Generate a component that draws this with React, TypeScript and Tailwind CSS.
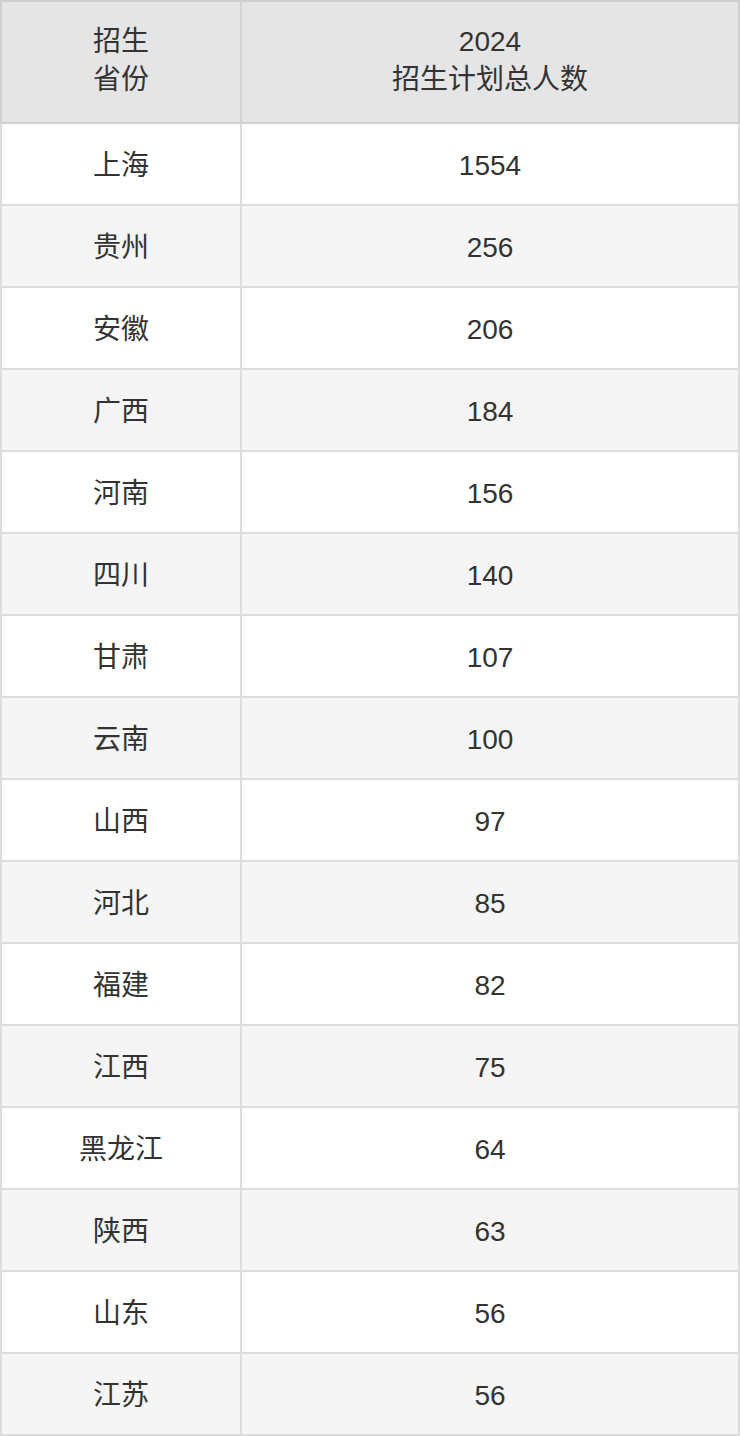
import React from 'react';

const rows: [string, string][] = [
  ['上海', '1554'],
  ['贵州', '256'],
  ['安徽', '206'],
  ['广西', '184'],
  ['河南', '156'],
  ['四川', '140'],
  ['甘肃', '107'],
  ['云南', '100'],
  ['山西', '97'],
  ['河北', '85'],
  ['福建', '82'],
  ['江西', '75'],
  ['黑龙江', '64'],
  ['陕西', '63'],
  ['山东', '56'],
  ['江苏', '56'],
];

const App: React.FC = () => {
  return (
    <div
      className="w-[740px] bg-white text-[#333333] text-[28px]"
      style={{ fontFamily: '"Liberation Sans", "Noto Sans CJK SC", sans-serif' }}
    >
      <div className="flex border-2 border-[#cfcfcf] bg-[#e5e5e5]">
        <div className="w-[240px] h-[120px] flex flex-col items-center justify-center pb-[3px] leading-[38px] border-r-2 border-[#d3d3d3]">
          <div>招生</div>
          <div>省份</div>
        </div>
        <div className="flex-1 h-[120px] flex flex-col items-center justify-center pb-[3px] leading-[38px]">
          <div>2024</div>
          <div>招生计划总人数</div>
        </div>
      </div>
      <div className="border-x-2 border-[#dcdcdc]">
        {rows.map(([prov, num], i) => (
          <div
            key={prov + i}
            className={`flex border-b-2 border-[#dcdcdc] ${i % 2 === 1 ? 'bg-[#f5f5f5]' : 'bg-white'}`}
          >
            <div className="w-[240px] h-[80px] pt-[3px] flex items-center justify-center border-r-2 border-[#dcdcdc]">
              {prov}
            </div>
            <div className="flex-1 h-[80px] pt-[3px] flex items-center justify-center">{num}</div>
          </div>
        ))}
      </div>
    </div>
  );
};

export default App;
